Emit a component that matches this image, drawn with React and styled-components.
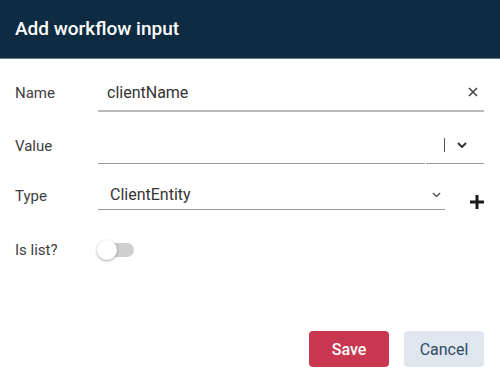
import styled, { createGlobalStyle } from 'styled-components';

const GlobalStyle = createGlobalStyle`
  * {
    box-sizing: border-box;
  }

  body {
    margin: 0;
    background: #ffffff;
    font-family: Roboto, "Liberation Sans", sans-serif;
  }
`;

const Dialog = styled.div`
  width: 500px;
  height: 380px;
  display: flex;
  flex-direction: column;
  background: #ffffff;
`;

const Header = styled.header`
  height: 59px;
  display: flex;
  align-items: center;
  padding: 0 15px 2px;
  background: #0e2b42;
  border-bottom: 1px solid #60798c;
`;

const Title = styled.h1`
  margin: 0;
  font-size: 19px;
  font-weight: 500;
  color: #ffffff;
`;

const Form = styled.div`
  flex: 1;
  display: flex;
  flex-direction: column;
  padding: 15px 16px 0 15px;
`;

const Row = styled.div`
  display: grid;
  grid-template-columns: 83px 1fr;
  align-items: center;
  margin-top: ${(props) => props.gap || 0}px;
`;

const Label = styled.label`
  padding-top: ${(props) => props.offset || 0}px;
  font-size: 15px;
  color: #3d3d3d;
`;

const Field = styled.div`
  flex: 1;
  height: ${(props) => props.h || 38}px;
  display: flex;
  align-items: center;
  border-bottom: ${(props) => (props.strong ? '2px solid #b9b9b9' : '1px solid #9a9a9a')};
`;

const Text = styled.span`
  flex: 1;
  padding-left: ${(props) => props.indent || 9}px;
  font-size: 16px;
  color: #333333;
`;

const ClearButton = styled.span`
  width: 20px;
  display: flex;
  justify-content: center;
  margin-right: 1px;
`;

const SplitField = styled.div`
  display: flex;
`;

const Adornment = styled.div`
  width: 58px;
  height: 37px;
  display: flex;
  align-items: center;
  gap: 12px;
  margin-left: 1px;
  padding-left: 18px;
  border-bottom: 1px solid #9a9a9a;

  svg {
    display: block;
  }
`;

const Divider = styled.span`
  width: 1px;
  height: 14px;
  background: #555555;
`;

const TypeLine = styled.div`
  display: flex;
  align-items: flex-end;
`;

const Select = styled.div`
  flex: 1;
  height: 30px;
  display: flex;
  align-items: center;
  padding-right: 4px;
  border-bottom: 1px solid #9a9a9a;
`;

const AddButton = styled.span`
  width: 39px;
  display: flex;
  justify-content: flex-end;
  padding-bottom: 1px;
`;

const Track = styled.span`
  position: relative;
  display: block;
  width: 34px;
  height: 14px;
  margin-left: 2px;
  border-radius: 7px;
  background: #cfcfcf;
`;

const Knob = styled.span`
  position: absolute;
  left: -3px;
  top: -3px;
  width: 20px;
  height: 20px;
  border-radius: 50%;
  background: #ffffff;
  box-shadow: 0 1px 3px rgba(0, 0, 0, 0.35);
`;

const Actions = styled.div`
  margin-top: auto;
  display: flex;
  justify-content: flex-end;
  gap: 15px;
  padding-bottom: 13px;
`;

const Button = styled.button`
  width: 80px;
  height: 36px;
  border: none;
  border-radius: 4px;
  font-family: inherit;
  font-size: 16px;
  font-weight: ${(props) => (props.primary ? 500 : 400)};
  color: ${(props) => (props.primary ? '#ffffff' : '#2e4a62')};
  background: ${(props) => (props.primary ? '#c8374f' : '#dfe6ee')};
`;

function Chevron({ size = 10, color = '#333', width = 2 }) {
  return (
    <svg width={size} height={size * 0.6} viewBox="0 0 10 6">
      <path d="M1 1l4 4 4-4" fill="none" stroke={color} strokeWidth={width} />
    </svg>
  );
}

export default function App() {
  return (
    <Dialog>
      <GlobalStyle />
      <Header>
        <Title>Add workflow input</Title>
      </Header>
      <Form>
        <Row>
          <Label>Name</Label>
          <Field strong>
            <Text>clientName</Text>
            <ClearButton>
              <svg width="10" height="10" viewBox="0 0 10 10">
                <path d="M1 1l8 8M9 1l-8 8" stroke="#444" strokeWidth="1.6" />
              </svg>
            </ClearButton>
          </Field>
        </Row>
        <Row gap={15}>
          <Label>Value</Label>
          <SplitField>
            <Field h={37} />
            <Adornment>
              <Divider />
              <Chevron size={10} color="#333" width={2} />
            </Adornment>
          </SplitField>
        </Row>
        <Row gap={16}>
          <Label offset={1}>Type</Label>
          <TypeLine>
            <Select>
              <Text indent={12}>ClientEntity</Text>
              <Chevron size={9} color="#555" width={1.6} />
            </Select>
            <AddButton>
              <svg width="14" height="14" viewBox="0 0 14 14">
                <path d="M7 0v14M0 7h14" stroke="#1a1a1a" strokeWidth="3" />
              </svg>
            </AddButton>
          </TypeLine>
        </Row>
        <Row gap={31}>
          <Label>Is list?</Label>
          <div>
            <Track>
              <Knob />
            </Track>
          </div>
        </Row>
        <Actions>
          <Button primary>Save</Button>
          <Button>Cancel</Button>
        </Actions>
      </Form>
    </Dialog>
  );
}
